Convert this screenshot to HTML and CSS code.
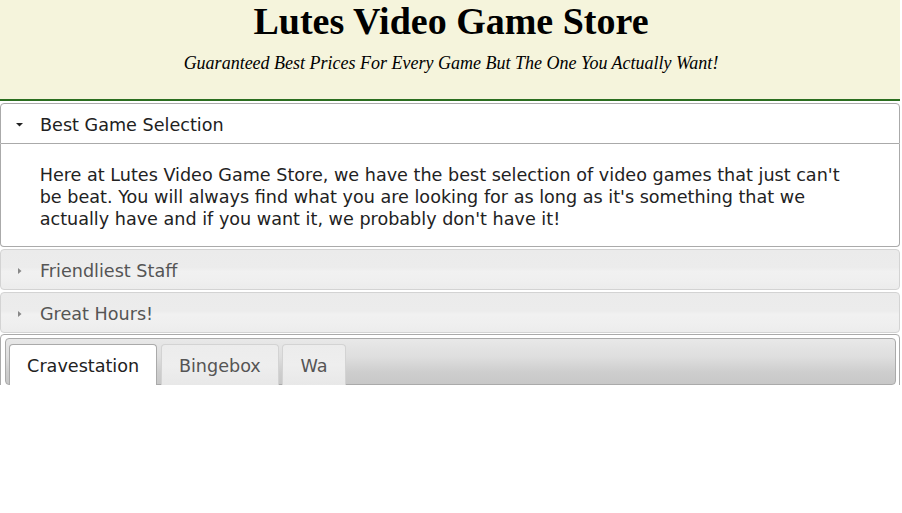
FILE: index.html
```html
<!DOCTYPE html>
<html>
<head>
<meta charset="utf-8">
<title>Lutes Video Game Store</title>
<link rel="stylesheet" href="styles.css">
</head>
<body>
<div class="page">
  <header class="masthead">
    <h1 class="title">Lutes Video Game Store</h1>
    <p class="tagline">Guaranteed Best Prices For Every Game But The One You Actually Want!</p>
  </header>

  <div class="accordion">
    <h3 class="acc-header acc-active">
      <svg class="icon" width="16" height="16" viewBox="0 0 16 16"><polygon points="5,6 12,6 8.5,9.5" fill="#222"/></svg>
      <span>Best Game Selection</span>
    </h3>
    <div class="acc-content">Here at Lutes Video Game Store, we have the best selection of video games that just can't be beat. You will always find what you are looking for as long as it's something that we actually have and if you want it, we probably don't have it!</div>
    <h3 class="acc-header">
      <svg class="icon" width="16" height="16" viewBox="0 0 16 16"><polygon points="7,5 10.5,8 7,11" fill="#888"/></svg>
      <span>Friendliest Staff</span>
    </h3>
    <h3 class="acc-header">
      <svg class="icon" width="16" height="16" viewBox="0 0 16 16"><polygon points="7,5 10.5,8 7,11" fill="#888"/></svg>
      <span>Great Hours!</span>
    </h3>
  </div>

  <div class="tabs">
    <ul class="tab-nav">
      <li class="tab tab-active">Cravestation</li>
      <li class="tab">Bingebox</li>
      <li class="tab">Wa</li>
    </ul>
  </div>
</div>
</body>
</html>
```
FILE: styles.css
```css
html, body {
  margin: 0;
  padding: 0;
  background: #fff;
}

.page {
  width: 900px;
  height: 385px;
  overflow: hidden;
  font-family: "DejaVu Sans", Verdana, sans-serif;
  font-size: 17.6px;
}

.masthead {
  width: 902px;
  height: 99px;
  background: #f5f4dc;
  border-bottom: 2px solid #2b6e1f;
  text-align: center;
  font-family: "Liberation Serif", "Times New Roman", serif;
  color: #000;
}

.title {
  margin: 0;
  font-size: 38px;
  line-height: 42px;
  font-weight: bold;
}

.tagline {
  margin: 11px 0 0;
  font-size: 18px;
  line-height: 20px;
  font-style: italic;
}

.accordion {
  margin: 0;
}

.acc-header {
  display: flex;
  align-items: center;
  margin: 2px 0 0;
  padding: 10px 8.8px 7px 9.8px;
  font-size: 17.6px;
  font-weight: normal;
  line-height: 22px;
  color: #555;
  border: 1px solid #d3d3d3;
  border-radius: 4px;
  background: linear-gradient(to bottom, #ebebeb 0%, #ececec 45%, #f1f1f1 55%, #efefef 80%, #ececec 100%);
}

.acc-header .icon {
  flex: none;
  margin-right: 13.2px;
}

.acc-active {
  color: #212121;
  background: #fff;
  border-color: #aaa;
  border-radius: 4px 4px 0 0;
}

.acc-content {
  padding: 19.6px 38.7px 16.4px;
  line-height: 22px;
  color: #222;
  background: #fff;
  border: 1px solid #aaa;
  border-top: 0;
  border-radius: 0 0 4px 4px;
}

.tabs {
  margin-top: 1px;
  padding: 3.5px;
  border: 1px solid #aaa;
  border-radius: 4px;
  background: #fff;
}

.tab-nav {
  display: flex;
  margin: 0;
  padding: 3.5px 3.5px 0;
  list-style: none;
  border: 1px solid #aaa;
  border-radius: 4px;
  background: linear-gradient(to bottom, #e8e8e8 0%, #dedede 40%, #cdcdcd 75%, #c8c8c8 100%);
}

.tab {
  margin: 1px 3.5px -1px 0;
  padding: 10.8px 17.1px 7.8px;
  line-height: 21px;
  color: #555;
  border: 1px solid #d3d3d3;
  border-bottom: 0;
  border-radius: 4px 4px 0 0;
  background: linear-gradient(to bottom, #ececec 0%, #eeeeee 50%, #e8e8e8 100%);
}

.tab-active {
  color: #212121;
  background: #fff;
  border-color: #aaa;
}
```
